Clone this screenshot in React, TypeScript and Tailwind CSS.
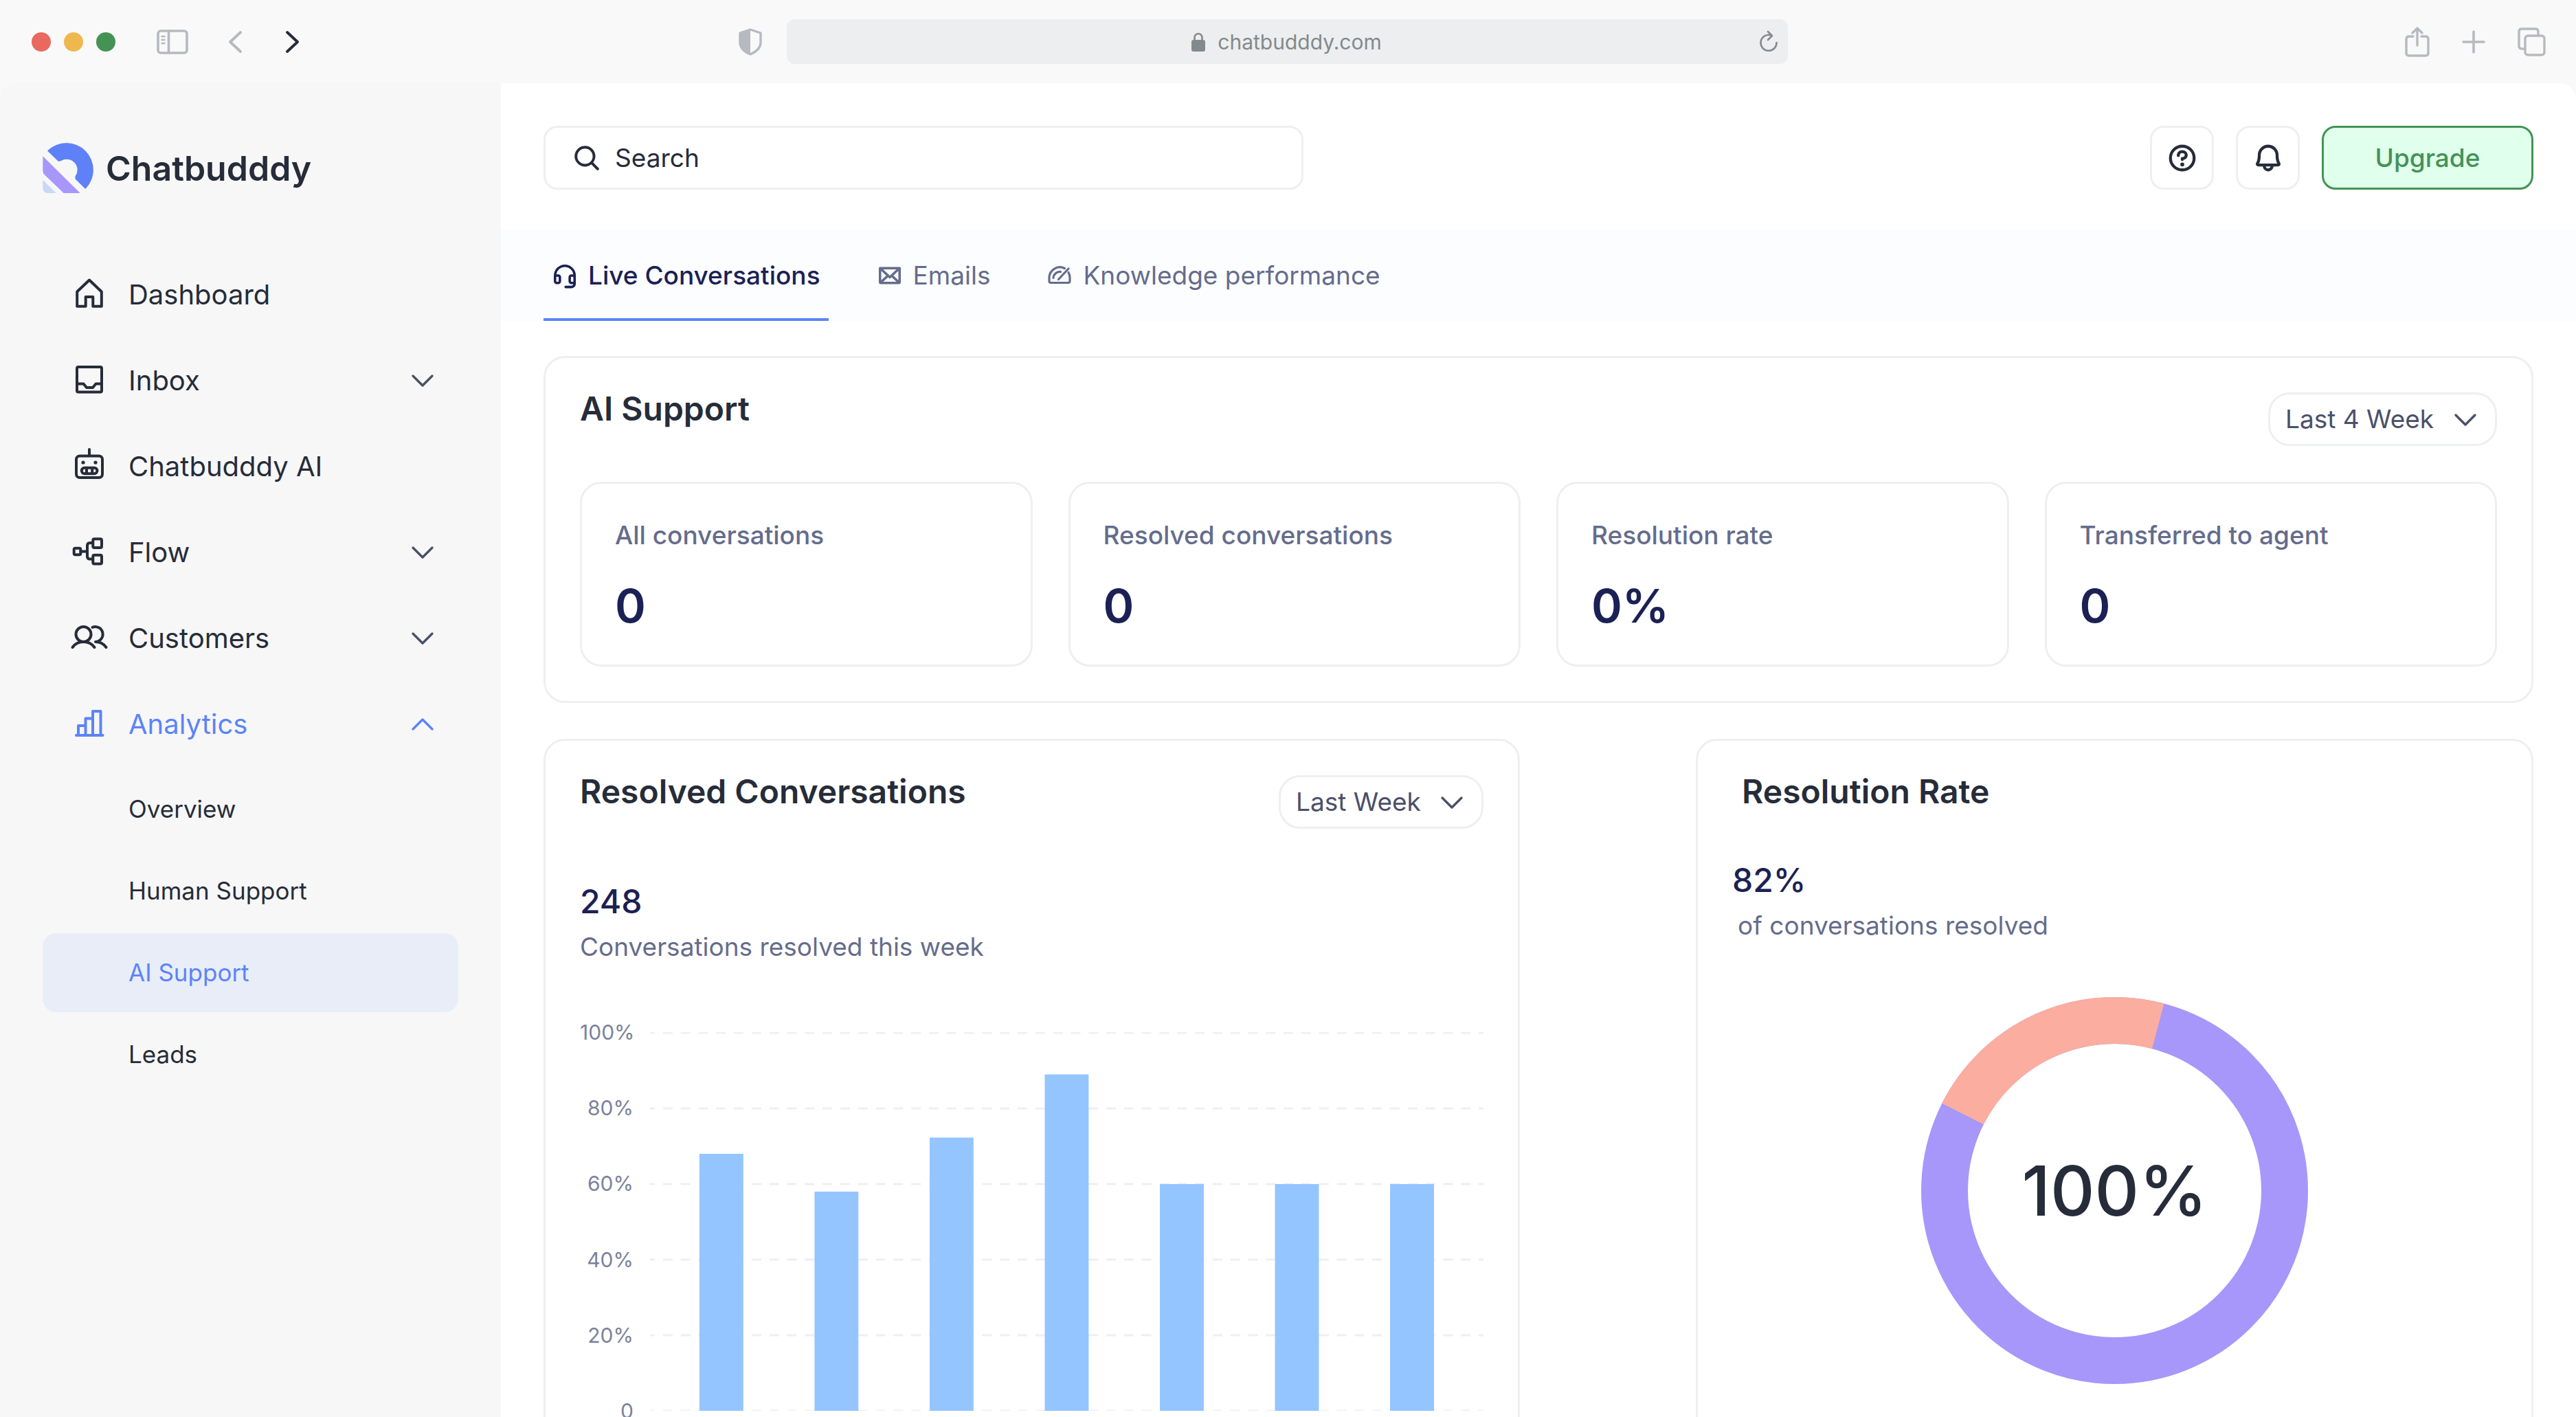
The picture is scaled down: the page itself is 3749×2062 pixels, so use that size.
import React, { useState } from 'react';
import {
  PiBellBold,
  PiEnvelopeBold,
  PiHeadsetBold,
  PiMagnifyingGlassBold,
  PiQuestionBold,
} from 'react-icons/pi';

interface IconProps {
  className?: string;
}

interface StrokeIconProps extends IconProps {
  viewBox?: string;
  strokeWidth?: number;
  children: React.ReactNode;
}

const StrokeIcon: React.FC<StrokeIconProps> = ({
  className = 'size-12',
  viewBox = '0 0 48 48',
  strokeWidth = 4,
  children,
}) => (
  <svg
    className={`${className} shrink-0 overflow-visible`}
    viewBox={viewBox}
    fill="none"
    stroke="currentColor"
    strokeWidth={strokeWidth}
    strokeLinecap="round"
    strokeLinejoin="round"
    aria-hidden="true"
  >
    {children}
  </svg>
);

const HomeIcon = () => (
  <StrokeIcon>
    <path d="M24 2.5 41.8 19.5V40.7H29.3V27H18.7V40.7H6.2V19.5Z" />
  </StrokeIcon>
);

const InboxIcon = () => (
  <StrokeIcon>
    <rect x="6" y="4" width="36" height="36.5" rx="2" />
    <path d="M6 28.5H15.5L20 34H29L33.5 28.5H42" />
  </StrokeIcon>
);

const RobotIcon = () => (
  <StrokeIcon>
    <rect x="5" y="8.5" width="38" height="31.5" rx="5" />
    <path d="M24-1V8" />
    <rect x="12.8" y="25.8" width="22.6" height="8.4" rx="4.2" />
    <path d="M20 26V34M28.2 26V34" />
    <circle cx="15" cy="18" r="2.6" fill="currentColor" stroke="none" />
    <circle cx="33" cy="18" r="2.6" fill="currentColor" stroke="none" />
  </StrokeIcon>
);

const FlowIcon = () => (
  <StrokeIcon>
    <rect x="1.7" y="17.7" width="9.6" height="9.6" rx="2" />
    <rect x="29.3" y="4.3" width="12.7" height="12.7" rx="2" />
    <rect x="29.3" y="27.7" width="12.7" height="12.7" rx="2" />
    <path d="M11.5 22.5H21M29 10H25Q21 10 21 14V29.5Q21 33.5 25 33.5H29" />
  </StrokeIcon>
);

const UsersIcon = () => (
  <StrokeIcon>
    <circle cx="15.5" cy="18" r="11" />
    <path d="M-.5 37C3 32 9 29 15.5 29S28 32 31.5 37" />
    <path d="M28.5 7.8A11 11 0 1 1 33 29C39 29 45 32 48.5 37" />
  </StrokeIcon>
);

const ChartIcon = () => (
  <StrokeIcon>
    <path d="M5 40H43.5M8 40V26H18.5M18.5 40V15.5H29M29 40V5H40.5V40" />
  </StrokeIcon>
);

const GaugeIcon: React.FC<IconProps> = ({ className }) => (
  <StrokeIcon className={className} viewBox="0 0 38 38" strokeWidth={3.2}>
    <path d="M26.5 8.500A15.500 15.500 0 0 0 4 22V27Q4 29.500 6.500 29.500H31.500Q34 29.500 34 27V22Q34 18 32 14.500" />
    <path d="M17.500 24.500 32 9" />
    <path d="M10 22.500A9.500 9.500 0 0 1 20.500 13.500" />
  </StrokeIcon>
);

const Chevron: React.FC<IconProps & { up?: boolean }> = ({ className = '', up }) => (
  <StrokeIcon className={`h-4 w-8 ${className}`} viewBox="0 0 32 16" strokeWidth={3.4}>
    <path d={up ? 'M2 15 16 1 30 15' : 'M2 1 16 15 30 1'} />
  </StrokeIcon>
);

const Logo = () => (
  <svg className="size-[72px] shrink-0 overflow-visible" viewBox="0 0 72 72" aria-hidden="true">
    <path
      d="M7 10.5A37 37 0 0 1 62.3 66L47.5 51.5V47.5A15.5 15.5 0 0 0 27 25Q25 26 22.5 25.5Z"
      fill="#5f81f8"
    />
    <path d="M.3 18.3 54.7 72H30.7L3 45.5Q.3 43 .3 39Z" fill="#a797fb" />
    <path d="M.3 52.7 19.7 72H8Q.3 72 .3 64Z" fill="#c8d8f5" />
  </svg>
);

const BrowserBar = () => (
  <div className="grid h-[121px] shrink-0 grid-cols-[1029fr_1527fr_1103fr] items-center bg-[#f9f9f9] pr-11 pl-[46px] text-[#b6bac0]">
    <div className="flex items-center">
      <div className="flex gap-[19px]">
        <span className="size-7 rounded-full bg-[#e9695e]" />
        <span className="size-7 rounded-full bg-[#efb84f]" />
        <span className="size-7 rounded-full bg-[#449355]" />
      </div>
      <button type="button" aria-label="Toggle sidebar" className="ml-[60px]">
        <StrokeIcon className="h-9 w-[46px]" viewBox="0 0 46 36" strokeWidth={3.6}>
          <rect x="2" y="2" width="42" height="32" rx="4" />
          <path d="M17.5 2V34" />
          <path d="M7.5 10H11.5M7.5 15H11.5M7.5 20H11.5" strokeWidth={2.6} />
        </StrokeIcon>
      </button>
      <button type="button" aria-label="Back" className="ml-[58px]">
        <StrokeIcon className="h-8 w-5" viewBox="0 0 20 32">
          <path d="M18 2 3 16 18 30" />
        </StrokeIcon>
      </button>
      <button type="button" aria-label="Forward" className="ml-16 text-[#262c39]">
        <StrokeIcon className="h-8 w-5" viewBox="0 0 20 32">
          <path d="M2 2 17 16 2 30" />
        </StrokeIcon>
      </button>
    </div>

    <div className="flex items-center gap-9">
      <svg className="h-10 w-[34px] shrink-0" viewBox="0 0 34 40" aria-hidden="true">
        <path
          d="M17 2 32 7V22Q31 32 17 38Q3 32 2 22V7Z"
          fill="none"
          stroke="currentColor"
          strokeWidth="3.4"
          strokeLinejoin="round"
        />
        <path d="M17 1V39Q2 32 1 22V7Z" fill="currentColor" />
      </svg>
      <div className="flex h-[65px] grow items-center rounded-xl bg-[#edeef0] pr-3.5 pl-10 text-[#838a8b]">
        <div className="flex grow items-center justify-center gap-[18px]">
          <svg className="h-7 w-5" viewBox="0 0 20 28" aria-hidden="true">
            <rect y="11" width="20" height="17" rx="3" fill="currentColor" />
            <path d="M4.5 13V7.5a5.500 5.500 0 0 1 11 0V13" fill="none" stroke="currentColor" strokeWidth="2.6" />
          </svg>
          <span className="text-[30px] leading-10">chatbudddy.com</span>
        </div>
        <button type="button" aria-label="Reload">
          <StrokeIcon className="h-8 w-7" viewBox="0 0 28 32" strokeWidth={2.6}>
            <path d="M18 6.500A11.500 11.500 0 1 0 25.500 17" />
            <path d="M13 1 19 7 13 13" />
          </StrokeIcon>
        </button>
      </div>
    </div>

    <div className="flex items-center justify-end gap-12">
      <button type="button" aria-label="Share">
        <StrokeIcon className="h-11 w-9" viewBox="0 0 36 44" strokeWidth={3.4}>
          <path d="M12 14H6Q2 14 2 18V38Q2 42 6 42H30Q34 42 34 38V18Q34 14 30 14H24" />
          <path d="M18 27V2M11 9 18 2 25 9" />
        </StrokeIcon>
      </button>
      <button type="button" aria-label="New tab">
        <StrokeIcon className="size-8" viewBox="0 0 32 32" strokeWidth={3.6}>
          <path d="M16 1V31M1 16H31" />
        </StrokeIcon>
      </button>
      <button type="button" aria-label="Show tabs">
        <StrokeIcon className="h-[42px] w-[41px]" viewBox="0 0 41 42" strokeWidth={3.4}>
          <rect x="11" y="12" width="28" height="28" rx="4" />
          <path d="M10 31H6Q2 31 2 27V6Q2 2 6 2H26Q30 2 30 6V10" />
        </StrokeIcon>
      </button>
    </div>
  </div>
);

interface NavItem {
  label: string;
  icon: React.FC;
  expandable?: boolean;
  active?: boolean;
}

const navItems: NavItem[] = [
  { label: 'Dashboard', icon: HomeIcon },
  { label: 'Inbox', icon: InboxIcon, expandable: true },
  { label: 'Chatbudddy AI', icon: RobotIcon },
  { label: 'Flow', icon: FlowIcon, expandable: true },
  { label: 'Customers', icon: UsersIcon, expandable: true },
  { label: 'Analytics', icon: ChartIcon, expandable: true, active: true },
];

const analyticsItems = ['Overview', 'Human Support', 'AI Support', 'Leads'];

const Sidebar = () => (
  <aside className="w-[729px] shrink-0 rounded-tl-3xl bg-[#f7f7f7] px-[62px] pt-[88px] text-[#262c39]">
    <div className="flex items-center gap-5">
      <Logo />
      <span className="text-[50px] leading-[72px] font-semibold">Chatbudddy</span>
    </div>

    <nav className="mt-[85px]">
      {navItems.map(({ label, icon: Icon, expandable, active }) => (
        <a
          key={label}
          href="#"
          className={`flex h-[125px] items-center gap-[33px] pr-9 pl-11 text-[40px] ${active ? 'text-[#5b84f9]' : ''}`}
        >
          <Icon />
          <span className="grow">{label}</span>
          {expandable && <Chevron up={active} className={active ? '' : 'text-[#4a5068]'} />}
        </a>
      ))}
      <div className="mt-1 flex flex-col gap-1">
        {analyticsItems.map((label) => (
          <a
            key={label}
            href="#"
            className={`flex h-[115px] items-center rounded-[20px] pl-[125px] text-[35px] ${
              label === 'AI Support' ? 'bg-[#e9edf8] text-[#5b84f9]' : ''
            }`}
          >
            {label}
          </a>
        ))}
      </div>
    </nav>
  </aside>
);

const tabs = [
  { label: 'Live Conversations', icon: PiHeadsetBold },
  { label: 'Emails', icon: PiEnvelopeBold },
  { label: 'Knowledge performance', icon: GaugeIcon },
];

const Header = () => (
  <header className="flex items-center justify-between px-[62px] pt-[62px] pb-[57px] text-[#262c39]">
    <label className="flex h-[93px] w-[38.2%] items-center gap-5 rounded-[20px] border-3 border-[#eeeff2] pl-[39px]">
      <PiMagnifyingGlassBold className="size-[42px] shrink-0" />
      <input
        type="search"
        aria-label="Search"
        placeholder="Search"
        className="min-w-0 grow bg-transparent text-[37px] outline-none placeholder:text-[#262c39]"
      />
    </label>
    <div className="flex gap-8">
      <button
        type="button"
        aria-label="Help"
        className="flex size-[93px] items-center justify-center rounded-[20px] border-3 border-[#eeeff2]"
      >
        <PiQuestionBold className="size-[46px]" />
      </button>
      <button
        type="button"
        aria-label="Notifications"
        className="flex size-[93px] items-center justify-center rounded-[20px] border-3 border-[#eeeff2]"
      >
        <PiBellBold className="size-[46px]" />
      </button>
      <button
        type="button"
        className="h-[93px] w-[308px] rounded-[20px] border-3 border-[#449355] bg-[#e0ffec] text-[37px] font-medium text-[#449355]"
      >
        Upgrade
      </button>
    </div>
  </header>
);

const Tabs = () => {
  const [current, setCurrent] = useState('Live Conversations');

  return (
    <div role="tablist" className="flex gap-[58px] bg-[#fcfdff] px-[62px]">
      {tabs.map(({ label, icon: Icon }) => (
        <button
          key={label}
          type="button"
          role="tab"
          aria-selected={current === label}
          onClick={() => setCurrent(label)}
          className={`flex h-[134px] items-center gap-[15px] border-b-4 px-3 pt-1.5 text-[37px] ${
            current === label
              ? 'border-[#5b84f9] font-medium text-[#1b2154]'
              : 'border-transparent text-[#656c8c]'
          }`}
        >
          <Icon className="size-[38px]" />
          {label}
        </button>
      ))}
    </div>
  );
};

interface RangeSelectProps {
  label: string;
  options: string[];
}

const RangeSelect: React.FC<RangeSelectProps> = ({ label, options }) => (
  <div className="relative">
    <select
      aria-label={label}
      className="h-[78px] appearance-none rounded-[31px] border-3 border-[#eeeff2] bg-white pr-[88px] pl-[22px] text-[37px] text-[#4a5068]"
    >
      {options.map((option) => (
        <option key={option}>{option}</option>
      ))}
    </select>
    <Chevron className="pointer-events-none absolute top-8 right-[30px] text-[#4a5068]" />
  </div>
);

const stats = [
  { label: 'All conversations', value: '0' },
  { label: 'Resolved conversations', value: '0' },
  { label: 'Resolution rate', value: '0%' },
  { label: 'Transferred to agent', value: '0' },
];

const SupportSummary = () => (
  <section className="rounded-[31px] border-3 border-[#eeeff2] p-[50px]">
    <div className="flex items-start justify-between">
      <h2 className="text-5xl leading-12 font-semibold text-[#262c39]">AI Support</h2>
      <RangeSelect label="AI support period" options={['Last 4 Week']} />
    </div>
    <div className="mt-[52px] grid grid-cols-4 gap-[52px]">
      {stats.map(({ label, value }) => (
        <div key={label} className="rounded-[31px] border-3 border-[#eeeff2] px-12 pt-[51px] pb-[46px]">
          <p className="text-[37px] leading-12 font-medium text-[#656c8c]">{label}</p>
          <p className="mt-[38px] text-[68px] leading-20 font-semibold text-[#1b2154]">{value}</p>
        </div>
      ))}
    </div>
  </section>
);

const axisLabels = ['100%', '80%', '60%', '40%', '20%', '0'];
const dailyRates = [68, 58, 72.3, 89, 60, 60, 60];

const ResolvedConversations = () => (
  <section className="rounded-[31px] border-3 border-[#eeeff2] p-[50px]">
    <div className="flex items-start justify-between">
      <h2 className="text-5xl leading-12 font-semibold text-[#262c39]">Resolved Conversations</h2>
      <RangeSelect label="Resolved conversations period" options={['Last Week']} />
    </div>
    <p className="mt-[76px] text-5xl leading-[60px] font-medium text-[#1b2154]">248</p>
    <p className="mt-3 text-[37px] leading-12 text-[#656c8c]">Conversations resolved this week</p>

    <div className="mt-20 flex gap-6">
      <ul className="flex w-[78px] flex-col justify-between text-right text-[30px] leading-10 text-[#7b829b]">
        {axisLabels.map((label) => (
          <li key={label}>{label}</li>
        ))}
      </ul>
      <svg className="grow py-5" viewBox="0 0 1215 552" aria-label="Resolved conversations per day">
        {axisLabels.map((label, i) => (
          <line
            key={label}
            x1="0"
            x2="1215"
            y1={i * 110.2 + 1}
            y2={i * 110.2 + 1}
            stroke="#eeeff5"
            strokeWidth="3"
            strokeDasharray="14 11.85"
            strokeDashoffset="7"
          />
        ))}
        {dailyRates.map((rate, i) => (
          <rect
            key={i}
            x={72 + i * 167.8}
            y={552 - rate * 5.51}
            width="64"
            height={rate * 5.51}
            fill="#94c5ff"
          />
        ))}
      </svg>
    </div>
  </section>
);

const ResolutionRate = () => (
  <section className="rounded-[31px] border-3 border-[#eeeff2] p-[50px]">
    <h2 className="pl-3.5 text-5xl leading-12 font-semibold text-[#262c39]">Resolution Rate</h2>
    <p className="mt-[75px] text-5xl leading-[60px] font-medium text-[#1b2154]">82%</p>
    <p className="mt-3 pl-2 text-[37px] leading-12 text-[#656c8c]">of conversations resolved</p>

    <div className="mt-20 grid place-items-center">
      <svg className="col-start-1 row-start-1 size-[563px]" viewBox="-281.5 -281.5 563 563" aria-hidden="true">
        <circle r="247.5" fill="none" stroke="#a797fa" strokeWidth="68" />
        <circle
          r="247.5"
          fill="none"
          stroke="#fbad9f"
          strokeWidth="68"
          pathLength="360"
          strokeDasharray="78 282"
          transform="rotate(-153.200)"
        />
      </svg>
      <span className="col-start-1 row-start-1 text-[100px] leading-none font-medium text-[#262c39]">100%</span>
    </div>
  </section>
);

export default function App() {
  return (
    <div className="flex h-screen flex-col overflow-hidden bg-[#f9f9f9] font-[Inter,sans-serif]">
      <BrowserBar />
      <div className="flex min-h-0 grow">
        <Sidebar />
        <div className="min-w-0 grow overflow-hidden rounded-tr-3xl bg-white">
          <Header />
          <Tabs />
          <main className="flex flex-col gap-[52px] px-[62px] pt-[51px] pb-16">
            <SupportSummary />
            <div className="grid grid-cols-[1420fr_1218fr] gap-64">
              <ResolvedConversations />
              <ResolutionRate />
            </div>
          </main>
        </div>
      </div>
    </div>
  );
}
